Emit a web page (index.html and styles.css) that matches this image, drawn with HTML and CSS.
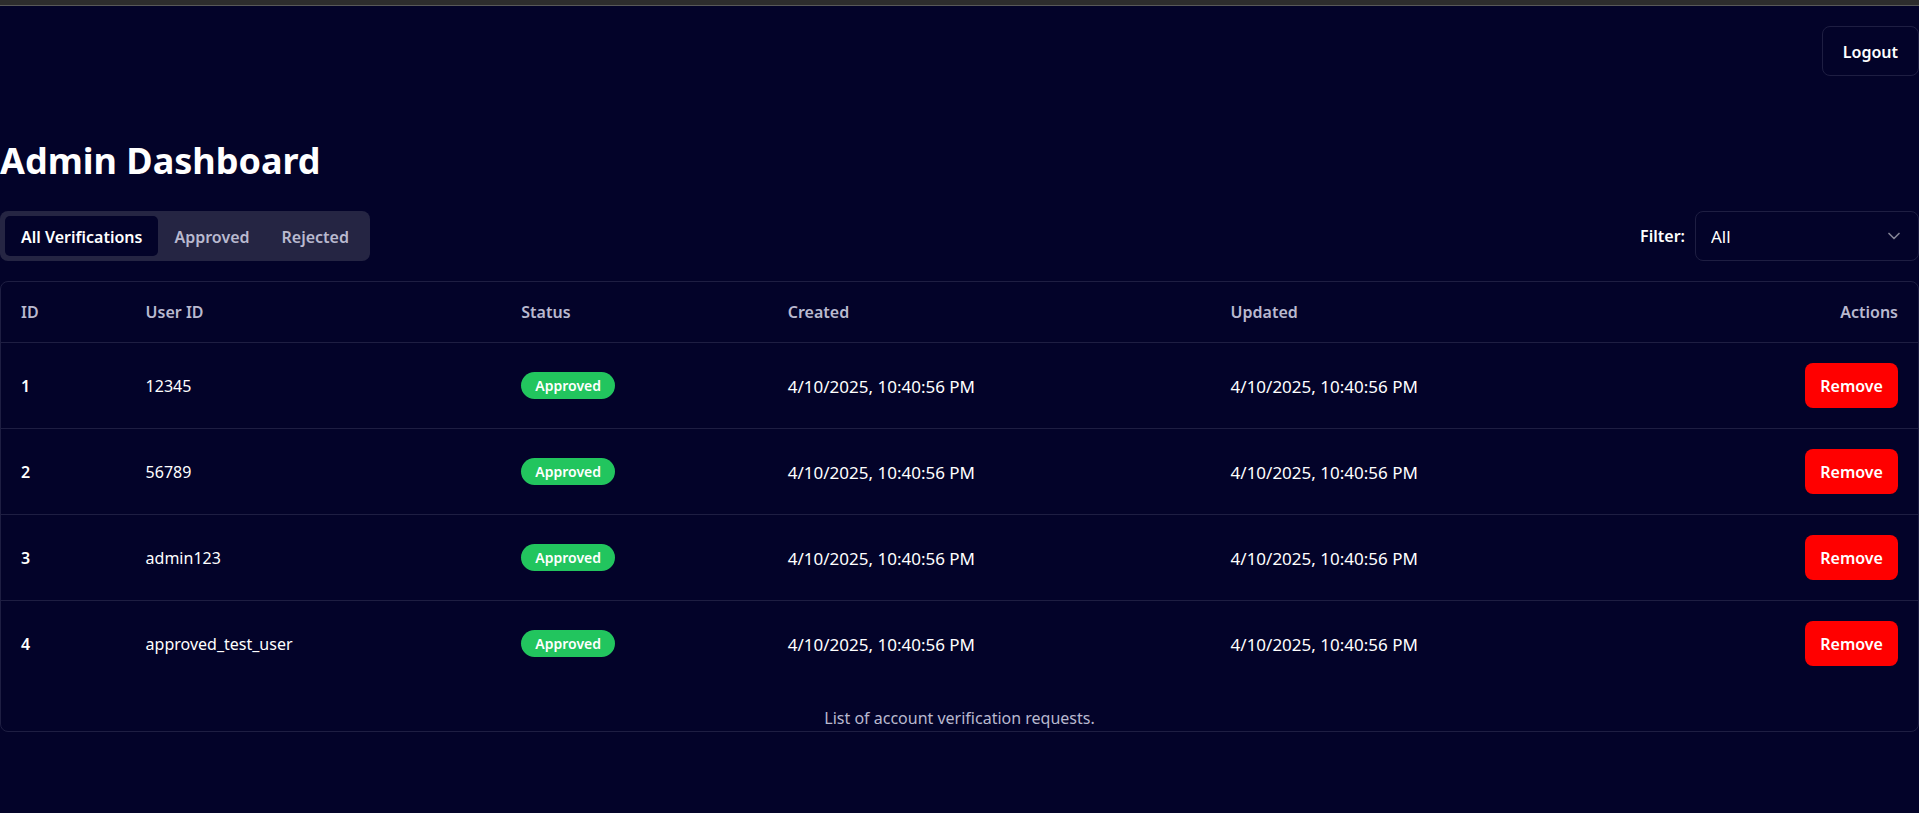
FILE: index.html
```html
<!DOCTYPE html>
<html lang="en">
<head>
<meta charset="utf-8">
<title>Admin Dashboard</title>
<link rel="stylesheet" href="styles.css">
</head>
<body>
<div class="top-strip"></div>
<header class="site-header">
  <button class="logout" type="button">Logout</button>
</header>
<main class="dashboard">
  <h1 class="title">Admin Dashboard</h1>
  <div class="toolbar">
    <div class="tabs" role="tablist">
      <button class="tab tab-active" type="button" role="tab" aria-selected="true">All Verifications</button>
      <button class="tab" type="button" role="tab" aria-selected="false">Approved</button>
      <button class="tab" type="button" role="tab" aria-selected="false">Rejected</button>
    </div>
    <div class="filter">
      <label class="filter-label" for="filter">Filter:</label>
      <div class="select-wrap">
        <select class="select" id="filter">
          <option>All</option>
          <option>Approved</option>
          <option>Rejected</option>
        </select>
        <svg class="chevron" viewBox="0 0 24 24" aria-hidden="true"><path d="m6 9 6 6 6-6"/></svg>
      </div>
    </div>
  </div>
  <div class="table-card">
    <table class="table">
      <caption class="caption">List of account verification requests.</caption>
      <colgroup>
        <col class="col-id"><col class="col-user"><col class="col-status"><col class="col-date"><col class="col-date"><col class="col-actions">
      </colgroup>
      <thead>
        <tr><th>ID</th><th>User ID</th><th>Status</th><th>Created</th><th>Updated</th><th class="actions">Actions</th></tr>
      </thead>
      <tbody>
        <tr><td class="id">1</td><td class="user">12345</td><td><span class="badge">Approved</span></td><td class="date">4/10/2025, 10:40:56 PM</td><td class="date">4/10/2025, 10:40:56 PM</td><td class="actions"><button class="remove" type="button">Remove</button></td></tr>
        <tr><td class="id">2</td><td class="user">56789</td><td><span class="badge">Approved</span></td><td class="date">4/10/2025, 10:40:56 PM</td><td class="date">4/10/2025, 10:40:56 PM</td><td class="actions"><button class="remove" type="button">Remove</button></td></tr>
        <tr><td class="id">3</td><td class="user">admin123</td><td><span class="badge">Approved</span></td><td class="date">4/10/2025, 10:40:56 PM</td><td class="date">4/10/2025, 10:40:56 PM</td><td class="actions"><button class="remove" type="button">Remove</button></td></tr>
        <tr><td class="id">4</td><td class="user">approved_test_user</td><td><span class="badge">Approved</span></td><td class="date">4/10/2025, 10:40:56 PM</td><td class="date">4/10/2025, 10:40:56 PM</td><td class="actions"><button class="remove" type="button">Remove</button></td></tr>
      </tbody>
    </table>
  </div>
</main>
</body>
</html>
```
FILE: styles.css
```css
:root {
  --bg: #030329;
  --line: #1e1e42;
  --muted: #b9b9cf;
  --panel: #252543;
}

* { box-sizing: border-box; }

body {
  margin: 0;
  min-height: 100vh;
  background: var(--bg);
  color: #fff;
  font: 16px/25px "Noto Sans", sans-serif;
}

button, select {
  font: inherit;
  color: inherit;
  margin: 0;
}

.top-strip {
  height: 6px;
  background: #2d2d2d;
  border-bottom: 1px solid #585858;
}

.site-header {
  display: flex;
  justify-content: flex-end;
  padding: 20px 0;
}

.logout {
  height: 50px;
  padding: 2px 20px 0;
  background: transparent;
  border: 1px solid var(--line);
  border-radius: 8px;
  font-weight: 600;
}

.dashboard { padding-top: 40px; }

.title {
  margin: 0 0 26px;
  font-size: 36px;
  line-height: 49px;
  font-weight: 700;
}

.toolbar {
  display: flex;
  justify-content: space-between;
  align-items: center;
  margin-bottom: 20px;
}

.tabs {
  display: flex;
  padding: 5px;
  background: var(--panel);
  border-radius: 8px;
}

.tab {
  height: 40px;
  padding: 2px 16px 0;
  border: 0;
  border-radius: 5px;
  background: transparent;
  color: var(--muted);
  font-weight: 600;
}

.tab-active {
  background: var(--bg);
  color: #fff;
}

.filter {
  display: flex;
  align-items: center;
  gap: 10px;
}

.filter-label {
  font-weight: 600;
}

.select-wrap {
  position: relative;
  width: 224px;
}

.select {
  display: block;
  width: 100%;
  height: 50px;
  padding: 0 15px;
  appearance: none;
  background: transparent;
  border: 1px solid var(--line);
  border-radius: 8px;
  font-size: 17px;
}

.select option { background: var(--bg); }

.chevron {
  position: absolute;
  top: 15px;
  right: 15px;
  width: 20px;
  height: 20px;
  fill: none;
  stroke: #fff;
  stroke-width: 2;
  stroke-linecap: round;
  stroke-linejoin: round;
  opacity: 0.5;
  pointer-events: none;
}

.table-card {
  border: 1px solid var(--line);
  border-radius: 8px;
}

.table {
  width: 100%;
  table-layout: fixed;
  border-collapse: separate;
  border-spacing: 0;
}

.col-id { width: 6.5%; }
.col-user { width: 19.6%; }
.col-status { width: 13.9%; }
.col-date { width: 23.1%; }

.table th {
  height: 61px;
  padding: 1px 20px 0;
  border-bottom: 1px solid var(--line);
  color: var(--muted);
  font-weight: 600;
  text-align: left;
}

.table td {
  height: 86px;
  padding: 0 20px;
  border-bottom: 1px solid var(--line);
  vertical-align: middle;
}

.table tbody tr:last-child td {
  height: 85px;
  border-bottom: 0;
}

.table .id,
.table .user,
.table .date { padding-top: 2px; }

.table .id { font-weight: 600; }
.table .date { font-size: 17px; }
.table .actions { text-align: right; }

.badge {
  display: inline-block;
  padding: 0 14px;
  border-radius: 999px;
  background: #22c55e;
  font-size: 14px;
  line-height: 27px;
  font-weight: 600;
  vertical-align: middle;
}

.remove {
  height: 45px;
  padding: 2px 15px 0;
  border: 0;
  border-radius: 8px;
  background: #f00;
  font-weight: 600;
  vertical-align: middle;
}

.caption {
  caption-side: bottom;
  margin-top: 20px;
  color: var(--muted);
}
```
